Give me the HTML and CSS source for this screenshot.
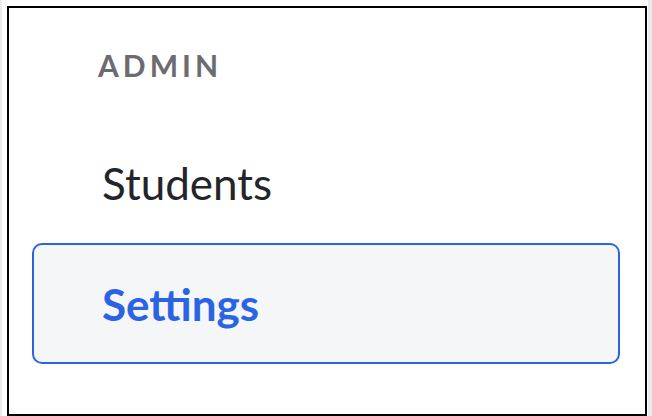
FILE: index.html
```html
<!DOCTYPE html>
<html>
<head>
<meta charset="utf-8">
<link rel="stylesheet" href="styles.css">
</head>
<body>
<div class="page">
  <nav class="frame">
    <div class="heading">ADMIN</div>
    <a class="item">Students</a>
    <a class="item active">Settings</a>
  </nav>
</div>
</body>
</html>
```
FILE: styles.css
```css
html, body {
  margin: 0;
  padding: 0;
  height: 100%;
}
body {
  background: #ebebeb;
  font-family: Lato, "Liberation Sans", sans-serif;
  overflow: hidden;
}
.page {
  margin-left: 2px;
  width: 646px;
  height: 100%;
  background: #ffffff;
  padding: 6px 0 0 5px;
  box-sizing: border-box;
}
.frame {
  width: 640px;
  height: 410px;
  box-sizing: border-box;
  border: 2px solid #000;
  padding: 0 25px 0 23px;
  display: flex;
  flex-direction: column;
}
.heading {
  margin: 39px 0 39px;
  padding-left: 66px;
  font-size: 30px;
  font-weight: 700;
  letter-spacing: 4px;
  color: #6b6b70;
  line-height: 36px;
}
.item {
  display: flex;
  align-items: center;
  height: 121px;
  box-sizing: border-box;
  padding-left: 68px;
  border: 2px solid transparent;
  border-radius: 10px;
  font-size: 44px;
  color: #23252b;
}
.item.active {
  background: #f5f6f8;
  border-color: #2b64e3;
  color: #2b64e3;
  font-weight: 700;
}
```
